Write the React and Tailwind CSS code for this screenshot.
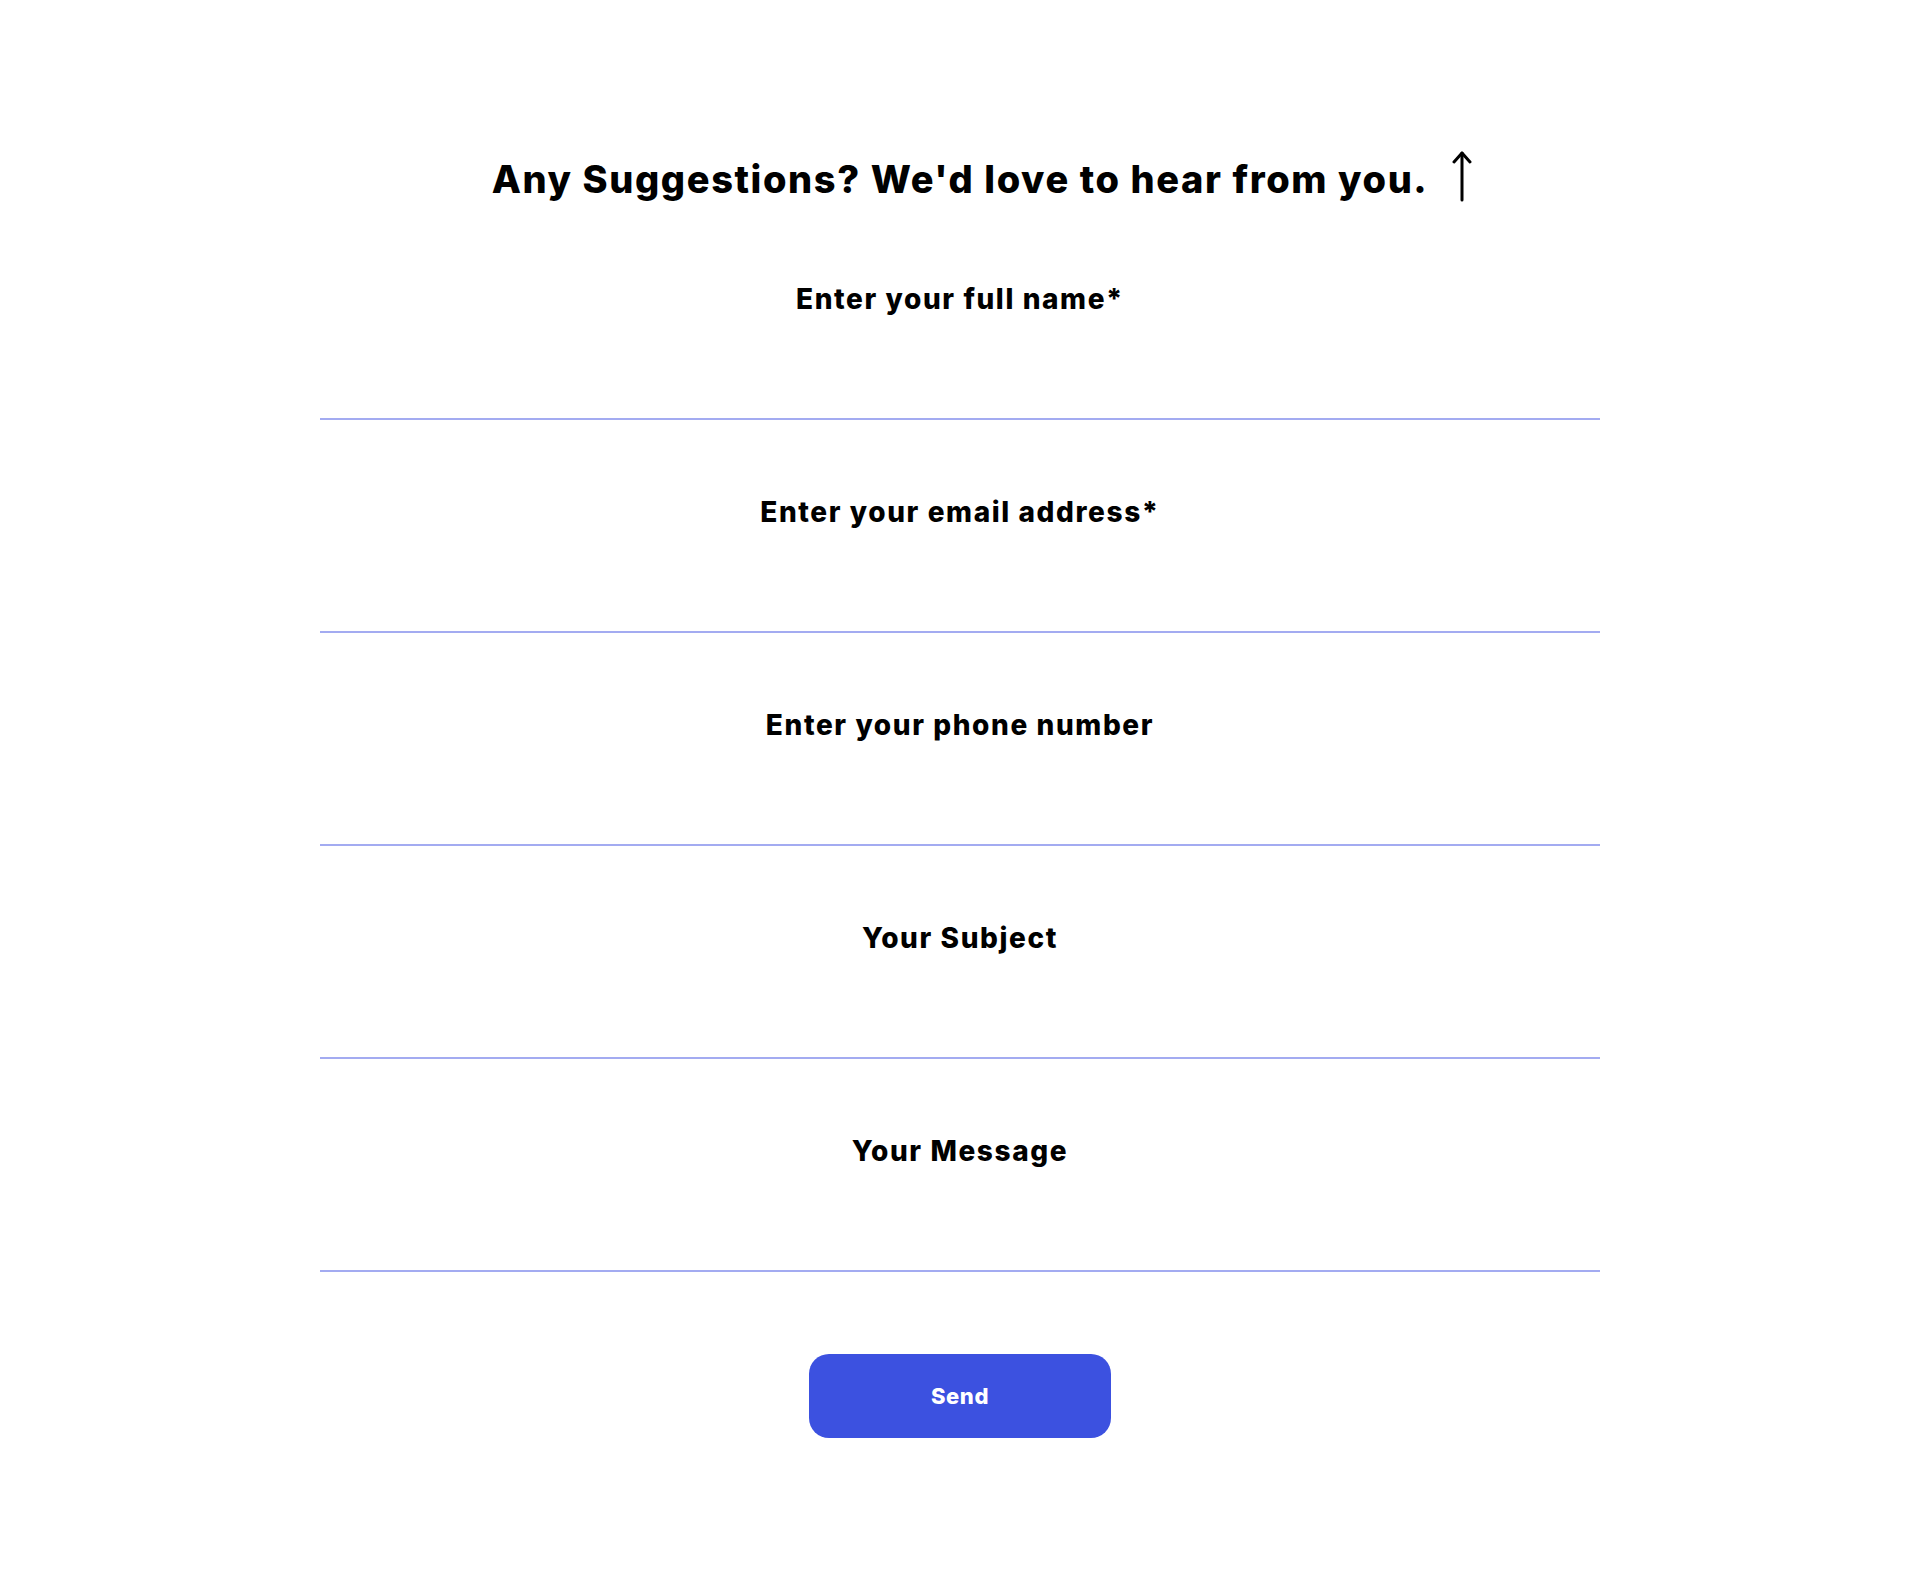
import { useState } from 'react';

const fields = [
  { name: 'name', label: 'Enter your full name*', type: 'text' },
  { name: 'email', label: 'Enter your email address*', type: 'email' },
  { name: 'phone', label: 'Enter your phone number', type: 'tel' },
  { name: 'subject', label: 'Your Subject', type: 'text' },
  { name: 'message', label: 'Your Message', type: 'text' },
];

export default function App() {
  const [values, setValues] = useState({});

  const handleChange = (name, value) => {
    setValues((prev) => ({ ...prev, [name]: value }));
  };

  return (
    <div className="min-h-[1588px] bg-white text-black font-['Inter',sans-serif]">
      <form
        className="w-[1280px] mx-auto pt-[151px] flex flex-col"
        onSubmit={(e) => e.preventDefault()}
      >
        {/* Heading - arrow hangs off the right of the centered text */}
        <h1 className="flex items-center justify-center h-[56px] text-[38px] font-extrabold tracking-[1.6px]">
          <span className="relative">
            Any Suggestions? We'd love to hear from you.
            <svg className="absolute left-[calc(100%+24px)] top-[-1px] w-[20px] h-[52px]" viewBox="0 0 20 52" fill="none" stroke="black" strokeWidth="3" strokeLinecap="round" strokeLinejoin="round">
              <path d="M10 50V3" />
              <path d="M2 12l8-9 8 9" />
            </svg>
          </span>
        </h1>

        {/* Fields */}
        {fields.map((f) => (
          <label key={f.name} className="flex flex-col mt-[74px]">
            <span className="h-[36px] flex items-center justify-center text-[28px] font-extrabold tracking-[1.6px]">
              {f.label}
            </span>
            <input
              type={f.type}
              value={values[f.name] || ''}
              onChange={(e) => handleChange(f.name, e.target.value)}
              className="h-[103px] w-full border-b-2 border-[#a3abf1] bg-transparent outline-none text-center text-[22px]"
            />
          </label>
        ))}

        {/* Send */}
        <div className="flex justify-center mt-[82px]">
          <button
            type="submit"
            className="w-[302px] h-[84px] rounded-[20px] bg-[#3c51e0] text-white text-[22px] font-extrabold tracking-[0.6px]"
          >
            Send
          </button>
        </div>
      </form>
    </div>
  );
}
